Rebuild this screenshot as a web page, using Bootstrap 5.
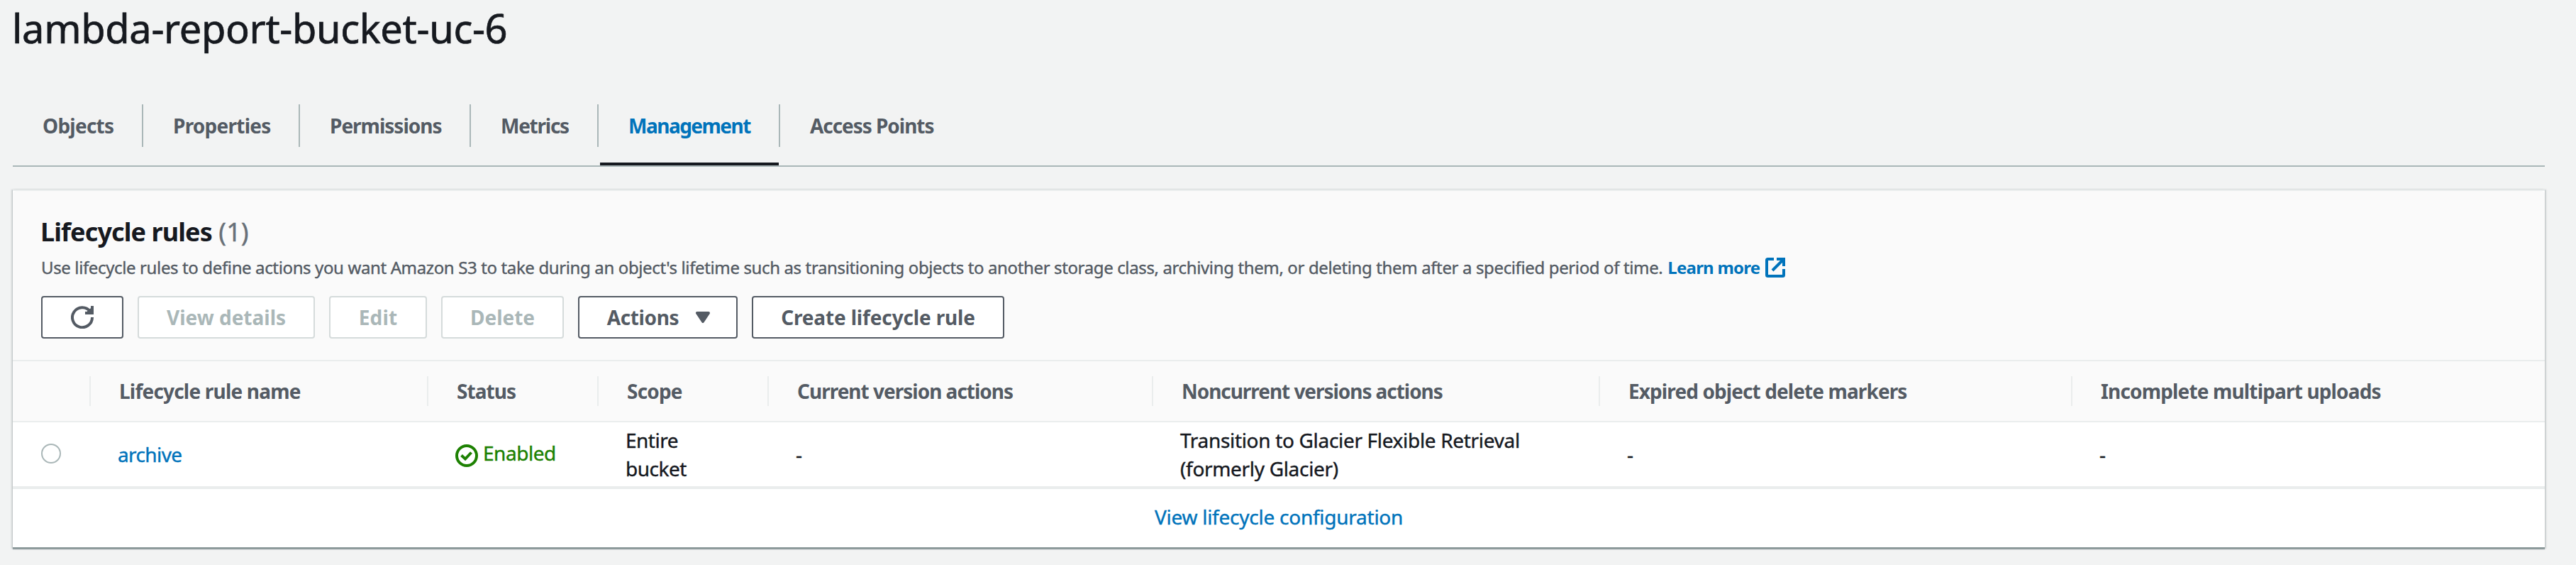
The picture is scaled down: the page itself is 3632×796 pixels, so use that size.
<!DOCTYPE html>
<html lang="en">
<head>
<meta charset="utf-8">
<title>lambda-report-bucket-uc-6</title>
<link href="https://cdn.jsdelivr.net/npm/bootstrap@5.3.0/dist/css/bootstrap.min.css" rel="stylesheet">
<style>
body { background: #f2f3f3; color: #16191f; font-family: "Noto Sans", sans-serif; font-size: 28px; line-height: 40px; }
a { color: #0073bb; text-decoration: none; }
main { padding: 0 44px 20px 18px; }
.bucket-title { font-size: 56px; line-height: 78px; height: 147px; margin-left: -1px; font-weight: 400; letter-spacing: -.35px; -webkit-text-stroke: .7px; }

.nav-tabs { border-bottom: 2px solid #aab7b8; height: 88px; margin-bottom: 32px; }
.nav-tabs .nav-item { height: 86px; }
.nav-tabs .nav-link { position: relative; height: 60px; line-height: 60px; padding: 0 0 0 42px; margin: 0; border: 0; border-radius: 0; border-right: 2px solid #aab7b8; color: #545b64; background: none; font-weight: 700; white-space: nowrap; }
.nav-tabs .nav-item:last-child .nav-link { border-right: 0; }
.nav-tabs .nav-link.active { color: #0073bb; background: none; border-color: #aab7b8; }
.nav-tabs .nav-link.active::after { content: ""; position: absolute; left: 2px; right: 0; top: 82px; height: 4px; background: #16191f; }
.tab-objects { width: 184px; letter-spacing: -.75px; }
.tab-properties { width: 221px; letter-spacing: -.75px; }
.tab-permissions { width: 241px; letter-spacing: -1px; }
.tab-metrics { width: 180px; letter-spacing: -1.25px; }
.tab-management { width: 256px; letter-spacing: -1.5px; }
.tab-access { width: 260px; letter-spacing: -1.05px; }

.card { --bs-card-border-width: 0; --bs-card-border-radius: 0; border-top: 2px solid #eaeded; border-bottom: 2px solid #879596; box-shadow: 0 1px 1px rgba(0,28,36,.3), 2px 0 2px rgba(0,28,36,.15), -2px 0 2px rgba(0,28,36,.15); }
.card-header { background: #fafafa; border-bottom: 2px solid #eaeded; padding: 33px 40px 30px; }
.card-header h2 { font-size: 36px; line-height: 50px; font-weight: 700; letter-spacing: -.9px; margin: 0 0 8px -1px; }
.counter { color: #687078; font-weight: 400; letter-spacing: 0; margin-left: 1px; -webkit-text-stroke: .4px; }
.description { color: #545b64; font-size: 24px; line-height: 33px; letter-spacing: -.37px; margin: 0 0 24px 0; white-space: nowrap; height: 33px; }
.description > span { -webkit-text-stroke: .4px; }
.description a { font-weight: 700; letter-spacing: -.75px; margin-left: 1px; }
.toolbar { gap: 20px; }
.toolbar .btn { --bs-btn-padding-x: 0; --bs-btn-padding-y: 0; height: 60px; padding: 0; border: 2px solid #545b64; border-radius: 4px; background: #fff; color: #545b64; font-size: 28px; line-height: 56px; font-weight: 700; white-space: nowrap; }
.toolbar .btn:disabled { border-color: #d5dbdb; color: #aab7b8; opacity: 1; background: #fff; }
.btn-refresh { width: 116px; }
.btn-view { width: 250px; letter-spacing: 0; }
.btn-edit { width: 138px; letter-spacing: .2px; }
.btn-delete { width: 173px; }
.btn-actions { width: 225px; letter-spacing: -.35px; }
.btn-actions svg { margin-right: -2px; }
.btn-create { width: 356px; letter-spacing: -.15px; }

.rules { table-layout: fixed; width: 3570px; margin: 0; border-collapse: separate; border-spacing: 0; }
.rules th, .rules td { padding: 0; vertical-align: middle; box-shadow: none; white-space: nowrap; }
.rules th { position: relative; height: 86px; padding: 0 0 1px 40px; background: #fafafa; color: #545b64; font-weight: 700; border-bottom: 2px solid #eaeded; }
.rules th:not(:last-child)::after { content: ""; position: absolute; right: 0; top: 21px; width: 2px; height: 42px; background: #eaeded; }
.rules td { height: 94px; padding: 0 0 0 38px; border-bottom: 4px solid #eaeded; color: #16191f; -webkit-text-stroke: .4px; }
.rules td:first-child { padding: 0 0 0 40px; }
.form-check-input { display: block; width: 28px; height: 28px; margin: -2px 0 0; border: 2px solid #aab7b8; }
.status-ok { color: #1d8102; gap: 7px; letter-spacing: -.45px; }
.status-ok span { margin-top: -4px; }
.card-footer { height: 82px; padding: 19px 0 0; border: 0; background: #fff; text-align: center; letter-spacing: -.25px; -webkit-text-stroke: .4px; }
.t-name { letter-spacing: -.8px; } .t-status { letter-spacing: -.95px; } .t-current { letter-spacing: -1px; }
.t-noncurrent { letter-spacing: -1.05px; } .t-expired { letter-spacing: -.9px; } .t-incomplete { letter-spacing: -.84px; }
.v-name { letter-spacing: -.6px; } .v-scope { letter-spacing: -.5px; } .v-move { letter-spacing: -.32px; }
svg { display: block; fill: none; stroke: currentColor; stroke-width: 4; }
</style>
</head>
<body>
<main>
  <h1 class="bucket-title mb-0">lambda-report-bucket-uc-6</h1>
  <ul class="nav nav-tabs flex-nowrap">
    <li class="nav-item"><a class="nav-link tab-objects" href="#">Objects</a></li>
    <li class="nav-item"><a class="nav-link tab-properties" href="#">Properties</a></li>
    <li class="nav-item"><a class="nav-link tab-permissions" href="#">Permissions</a></li>
    <li class="nav-item"><a class="nav-link tab-metrics" href="#">Metrics</a></li>
    <li class="nav-item"><a class="nav-link tab-management active" href="#">Management</a></li>
    <li class="nav-item"><a class="nav-link tab-access" href="#">Access Points</a></li>
  </ul>

  <section class="card">
    <div class="card-header">
      <h2>Lifecycle rules <span class="counter">(1)</span></h2>
      <p class="description d-flex"><span>Use lifecycle rules to define actions you want Amazon S3 to take during an object's lifetime such as transitioning objects to another storage class, archiving them, or deleting them after a specified period of time.&nbsp;</span><a class="d-flex align-items-center gap-2" href="#">Learn more
        <svg width="28" height="28" viewBox="0 0 28 28"><path d="M12 2H3.500Q2 2 2 3.500V24.500Q2 26 3.500 26H24.500Q26 26 26 24.500V16M16 2H26V12M26 2L10 18"/></svg></a></p>
      <div class="toolbar d-flex">
        <button class="btn btn-refresh d-flex align-items-center justify-content-center" aria-label="Refresh"><svg width="32" height="32" viewBox="0 0 32 32"><path d="M30 16A14 14 0 1 1 27 7.500"/><path d="M30 0V10H20M24 9L30 4"/></svg></button>
        <button class="btn btn-view" disabled>View details</button>
        <button class="btn btn-edit" disabled>Edit</button>
        <button class="btn btn-delete" disabled>Delete</button>
        <button class="btn btn-actions d-flex align-items-center justify-content-center">Actions<svg class="ms-4" width="20" height="16" viewBox="0 0 20 16"><path d="M2 2H18L10 14Z" fill="currentColor" stroke-linejoin="round"/></svg></button>
        <button class="btn btn-create">Create lifecycle rule</button>
      </div>
    </div>

    <table class="rules">
      <colgroup><col style="width:110px"><col style="width:476px"><col style="width:240px"><col style="width:240px"><col style="width:542px"><col style="width:630px"><col style="width:666px"><col style="width:666px"></colgroup>
      <thead>
        <tr><th></th><th class="t-name">Lifecycle rule name</th><th class="t-status">Status</th><th class="t-name">Scope</th><th class="t-current">Current version actions</th><th class="t-noncurrent">Noncurrent versions actions</th><th class="t-expired">Expired object delete markers</th><th class="t-incomplete">Incomplete multipart uploads</th></tr>
      </thead>
      <tbody>
        <tr>
          <td><input class="form-check-input" type="radio" name="rule" aria-label="archive"></td>
          <td class="v-name"><a href="#">archive</a></td>
          <td><div class="status-ok d-flex align-items-center"><svg class="mt-1" width="32" height="32" viewBox="0 0 32 32"><circle cx="16" cy="16" r="14"/><path d="M8.500 15.500L14 20.500L22.500 11.500"/></svg><span>Enabled</span></div></td>
          <td class="v-scope">Entire<br>bucket</td>
          <td>-</td>
          <td class="v-move">Transition to Glacier Flexible Retrieval<br>(formerly Glacier)</td>
          <td>-</td>
          <td>-</td>
        </tr>
      </tbody>
    </table>
    <div class="card-footer"><a href="#">View lifecycle configuration</a></div>
  </section>
</main>
<script src="https://cdn.jsdelivr.net/npm/bootstrap@5.3.0/dist/js/bootstrap.bundle.min.js"></script>
</body>
</html>
